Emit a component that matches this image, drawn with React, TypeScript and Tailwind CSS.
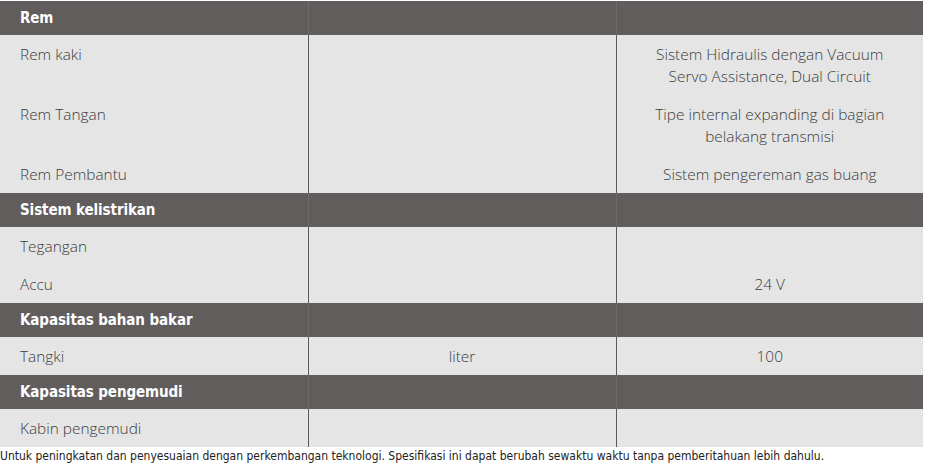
type Row = { label: string; unit?: string; value?: string[] };
type Section = { title: string; rows: Row[] };

const sections: Section[] = [
  {
    title: "Rem",
    rows: [
      { label: "Rem kaki", value: ["Sistem Hidraulis dengan Vacuum", "Servo Assistance, Dual Circuit"] },
      { label: "Rem Tangan", value: ["Tipe internal expanding di bagian", "belakang transmisi"] },
      { label: "Rem Pembantu", value: ["Sistem pengereman gas buang"] },
    ],
  },
  {
    title: "Sistem kelistrikan",
    rows: [{ label: "Tegangan" }, { label: "Accu", value: ["24 V"] }],
  },
  {
    title: "Kapasitas bahan bakar",
    rows: [{ label: "Tangki", unit: "liter", value: ["100"] }],
  },
  {
    title: "Kapasitas pengemudi",
    rows: [{ label: "Kabin pengemudi" }],
  },
];

const bodyFont = "font-['Open_Sans',sans-serif] font-light";
const headFont = "font-['Liberation_Sans_Narrow','DejaVu_Sans_Condensed',sans-serif] font-bold";

export default function App() {
  return (
    <div className="w-[925px] h-[464px] bg-white pt-px">
      <table className="w-[923px] border-collapse table-fixed">
        <colgroup>
          <col className="w-[308px]" />
          <col className="w-[308px]" />
          <col />
        </colgroup>
        <tbody>
          {sections.map((s) => (
            <SectionRows key={s.title} section={s} />
          ))}
        </tbody>
      </table>
      <p className="mt-[2px] text-[12px] leading-[14px] text-[#222] font-['Liberation_Sans_Narrow','DejaVu_Sans_Condensed',sans-serif]">
        Untuk peningkatan dan penyesuaian dengan perkembangan teknologi. Spesifikasi ini dapat berubah sewaktu waktu tanpa pemberitahuan lebih dahulu.
      </p>
    </div>
  );
}

function SectionRows({ section }: { section: Section }) {
  return (
    <>
      <tr className="bg-[#625d5d] h-[34px]">
        <th className={`text-left pl-5 text-white text-[15px] tracking-[-0.1px] ${headFont}`}>{section.title}</th>
        <th className="border-l border-[#6e6969]" />
        <th className="border-l border-[#6e6969]" />
      </tr>
      {section.rows.map((r) => (
        <tr key={r.label} className={`bg-[#e5e5e5] text-[15.4px] leading-[22px] text-[#3c3c3c] ${bodyFont}`}>
          <td className="pl-5 pt-[9px] pb-[7px] align-top">{r.label}</td>
          <td className="border-l border-[#5a5a5a] pt-[9px] pb-[7px] text-center align-top">{r.unit}</td>
          <td className="border-l border-[#5a5a5a] pt-[9px] pb-[7px] text-center align-top">
            {r.value?.map((v) => (
              <div key={v}>{v}</div>
            ))}
            {!r.value && <div>&nbsp;</div>}
          </td>
        </tr>
      ))}
    </>
  );
}
